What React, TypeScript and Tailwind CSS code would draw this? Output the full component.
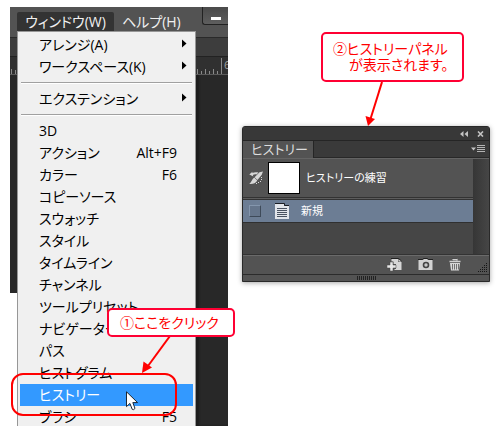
import React from "react";

type Entry = { label: string; shortcut?: string; submenu?: boolean; active?: boolean; cut?: boolean };

const groups: Entry[][] = [
  [
    { label: "アレンジ(A)", submenu: true },
    { label: "ワークスペース(K)", submenu: true },
  ],
  [{ label: "エクステンション", submenu: true }],
  [
    { label: "3D" },
    { label: "アクション", shortcut: "Alt+F9" },
    { label: "カラー", shortcut: "F6" },
    { label: "コピーソース" },
    { label: "スウォッチ" },
    { label: "スタイル" },
    { label: "タイムライン" },
    { label: "チャンネル" },
    { label: "ツールプリセット" },
    { label: "ナビゲーター" },
    { label: "パス" },
    { label: "ヒストグラム" },
    { label: "ヒストリー", active: true },
    { label: "ブラシ", shortcut: "F5", cut: true },
  ],
];

function MenuItem({ label, shortcut, submenu, active, cut }: Entry) {
  return (
    <button
      type="button"
      role="menuitem"
      className={`mx-[2px] flex items-start overflow-hidden pl-[19px] pr-4 text-left leading-[22px] ${
        cut ? "h-5" : "h-[22px]"
      } ${active ? "bg-[#3399ff] text-white" : "text-black"}`}
    >
      <span className="flex-1 whitespace-nowrap">{label}</span>
      {shortcut && <span>{shortcut}</span>}
      {submenu && (
        <svg className="-mr-[10px] mt-[5px]" width="5" height="9" viewBox="0 0 5 9" aria-hidden="true">
          <path d="M0 0.5L4.5 4.5L0 8.5Z" fill="#000" />
        </svg>
      )}
    </button>
  );
}

function WindowEdge({ ruler }: { ruler?: boolean }) {
  return (
    <>
      <div className="h-[6px] bg-[#535353]" />
      <div className="h-[19px] border-t border-[#2a2a2a] bg-[#3d3d3d]" />
      <div className="h-[19px] overflow-hidden border-y border-t-[#222222] border-b-[#5a5a5a] bg-[#303030]">
        <svg width="32" height="17" viewBox="0 0 32 17" aria-hidden="true" className="block">
          {ruler ? (
            <>
              <path
                d="M1.5 12v5M5.5 14v3M9.5 12v5M13.5 14v3M17.5 12v5M21.5 14v3M25.5 1v16"
                stroke="#8a8a8a"
                fill="none"
              />
              <text x="28" y="12" fontSize="11" fill="#a0a0a0" fontFamily="Open Sans, sans-serif">
                6
              </text>
            </>
          ) : (
            <path d="M1.5 12v5M5.5 13v4" stroke="#8a8a8a" fill="none" />
          )}
        </svg>
      </div>
    </>
  );
}

function AppWindow() {
  return (
    <section className="relative w-[218px] shrink-0 text-[14px]">
      <header className="flex h-6 items-end bg-[#535353] pl-[7px] text-[#f0f0f0]">
        <button type="button" className="h-[19px] w-[97px] rounded-t-[2px] bg-[#333333] leading-[19px] whitespace-nowrap">
          ウィンドウ(W)
        </button>
        <button type="button" className="h-[19px] pl-2 leading-[19px] whitespace-nowrap">
          ヘルプ(H)
        </button>
        <button
          type="button"
          aria-label="最小化"
          className="ml-auto flex h-[18px] w-[26px] items-end justify-end self-start rounded-bl-[3px] border-b border-l border-[#222222] bg-gradient-to-b from-[#4a4a4a] to-[#5e5e5e] pr-[7px] pb-1"
        >
          <span className="h-[3px] w-[10px] bg-white" />
        </button>
      </header>
      <div className="flex">
        <div className="h-[262px] w-[7px] shrink-0 bg-[#282828]">
          <WindowEdge />
        </div>
        <div role="menu" className="flex w-[179px] shrink-0 flex-col border-x border-t border-[#979797] bg-[#f0f0f0] pt-[2px]">
          {groups.map((group, i) => (
            <React.Fragment key={i}>
              {i > 0 && <hr className="mx-[3px] my-1 h-[2px] border-t border-b border-t-[#a0a0a0] border-b-white" />}
              {group.map((item) => (
                <MenuItem key={item.label} {...item} />
              ))}
            </React.Fragment>
          ))}
        </div>
        <div className="flex-1 bg-[#282828] shadow-[inset_3px_0_2px_#1c1c1c]">
          <WindowEdge ruler />
        </div>
      </div>

      <div className="absolute top-[366px] left-px h-[43px] w-[166px] rounded-xl border-2 border-[#ff0000]" />
      <svg className="absolute top-[329px] left-[130px]" width="34" height="40" viewBox="0 0 34 40" aria-hidden="true">
        <path d="M30 0L8 30" stroke="#ff0000" strokeWidth="2" />
        <path d="M2 37L3.5 25.5L12 31.5Z" fill="#ff0000" />
      </svg>
      <p className="absolute top-[301px] left-[97px] h-[29px] w-32 rounded-[5px] border-2 border-[#ff0033] bg-white pl-[11px] text-[14px] leading-[25px] whitespace-nowrap text-[#ff0000]">
        ①ここをクリック
      </p>
      <svg className="absolute top-[384px] left-[116px]" width="13" height="20" viewBox="0 0 13 20" aria-hidden="true">
        <path
          d="M0.5 0.8V15.6L3.9 12.4L6.2 18.3Q7.6 19.4 9 17.4L6.8 11.6H11.6Z"
          fill="#fff"
          stroke="#1c2733"
        />
      </svg>
    </section>
  );
}

function BrushIcon() {
  return (
    <svg width="14" height="14" viewBox="0 0 14 14" aria-hidden="true">
      <path d="M14 0.4L10.5 1.2L5.6 6.2L8.4 9L12.6 4Z" fill="#d8d8d8" />
      <path d="M5.2 6.6L8.2 9.4C7 12.4 3.2 13.2 0.2 12.8C2.6 11.4 2.8 8.6 5.2 6.6Z" fill="#d8d8d8" />
      <path d="M0.3 3.6L3.4 0.8V2C5 1.2 7.4 1.2 9.4 1.6L7.6 3.4C6 3.2 4.8 3.4 3.8 4L4.4 5.4Z" fill="#d8d8d8" />
      <path d="M12.5 6v1M12.5 8v1M11.5 10v1M9.5 11v1M7.5 12v1" stroke="#d8d8d8" />
    </svg>
  );
}

function DocumentIcon() {
  return (
    <svg width="14" height="16" viewBox="0 0 14 16" aria-hidden="true">
      <path d="M0 0.5H9.5V2.5H14" fill="none" stroke="#1b1e24" />
      <path d="M0 1H9V3H14V16H0Z" fill="#e2e5ea" />
      <path d="M2 5.5H12M2 7.5H12M2 9.5H12M2 11.5H12M2 13.5H12" stroke="#4a5361" />
    </svg>
  );
}

function NewDocIcon() {
  return (
    <svg width="15" height="13" viewBox="0 0 15 13" aria-hidden="true">
      <path d="M4 0.5H11.5L14.5 3" stroke="#202020" fill="none" />
      <path d="M4.5 1H11V4H14.5V12H7.5V11H9V6H6.5V3.5H4.5Z" fill="#d6d6d6" />
      <path d="M11.5 1.2L14.3 3.6H11.5Z" fill="#d6d6d6" />
      <path d="M3 4H6V7H9V10H6V13H3V10H0V7H3Z" fill="#e6e6e6" stroke="#444" strokeWidth="0.5" />
    </svg>
  );
}

function CameraIcon() {
  return (
    <svg width="15" height="13" viewBox="0 0 15 13" aria-hidden="true">
      <path d="M0 1.5H4.5L5.5 0.5H9.5L10.5 1.5H15" stroke="#202020" fill="none" />
      <path d="M0.5 2H5L6 1H9L10 2H14.5V12H0.5Z" fill="#d2d2d2" />
      <circle cx="8" cy="7" r="2.5" fill="#c8c8c8" stroke="#444" strokeWidth="1.6" />
    </svg>
  );
}

function TrashIcon() {
  return (
    <svg width="12" height="13" viewBox="0 0 12 13" aria-hidden="true">
      <path d="M3.5 2V0.5H8V2" stroke="#202020" fill="none" />
      <path d="M0.5 3.5H11.5M4 2V1.5H8V2.5" stroke="#d2d2d2" strokeWidth="1.4" fill="none" />
      <path d="M1 5H11L10 12.5H2Z" fill="#d8d8d8" />
      <path d="M3.5 6V11.5M5.5 6V11.5M7.5 6V11.5M9.5 6V11.5" stroke="#666" strokeWidth="0.9" />
    </svg>
  );
}

const gripDots = [0, 1, 2, 3, 4].flatMap((row) =>
  Array.from({ length: row + 1 }, (_, i) => ({ x: 8 - i * 2, y: row * 2 })),
);

function HistoryPanel() {
  return (
    <section className="rounded-t-[3px] border border-[#292929] bg-[#535353] shadow-[0_1px_5px_rgba(0,0,0,0.35)]">
      <div className="flex h-[14px] items-center justify-end gap-[9px] rounded-t-[2px] border-b border-[#252525] bg-[#383838] pr-[5px]">
        <button type="button" aria-label="折りたたむ">
          <svg className="block" width="8" height="6" viewBox="0 0 8 6" aria-hidden="true">
            <path d="M3.5 0V6L0 3ZM8 0V6L4.5 3Z" fill="#c4c4c4" />
          </svg>
        </button>
        <button type="button" aria-label="閉じる">
          <svg className="block" width="7" height="6" viewBox="0 0 7 6" aria-hidden="true">
            <path d="M1 0.5L6 5.5M6 0.5L1 5.5" stroke="#c4c4c4" strokeWidth="1.6" />
          </svg>
        </button>
      </div>
      <div className="flex h-[17px] items-stretch bg-[#3a3a3a]">
        <button type="button" role="tab" aria-selected="true" className="w-[71px] border-r border-[#252525] bg-[#535353] pl-2 text-left text-[13px] leading-[17px] whitespace-nowrap text-[#dddddd]">
          ヒストリー
        </button>
        <div className="flex flex-1 items-center justify-end border-b border-[#282828] pr-1">
          <button type="button" aria-label="パネルメニュー">
            <svg className="block" width="14" height="8" viewBox="0 0 14 8" aria-hidden="true">
              <path d="M0 2.5H5L2.5 5.5Z" fill="#c4c4c4" />
              <path d="M6 0.5H14M6 2.5H14M6 4.5H14M6 6.5H14" stroke="#b4b4b4" />
            </svg>
          </button>
        </div>
      </div>
      <div className="flex border-t border-[#646464]">
        <div className="min-w-0 flex-1 bg-[#464646] text-[11px]">
          <div className="flex h-[38px] items-center bg-[#535353] pl-[6px] text-white">
            <BrushIcon />
            <span className="ml-[5px] size-8 border border-black bg-white" />
            <span className="ml-[6px] whitespace-nowrap">ヒストリーの練習</span>
          </div>
          <div className="h-[3px] border-y border-[#333333] bg-[#5c5c5c]" />
          <label className="flex h-[22px] items-center bg-[#6c7d94] pl-[6px] text-white">
            <input
              type="checkbox"
              className="size-3 appearance-none border border-t-[#8496ad] border-r-[#3e4a59] border-b-[#3e4a59] border-l-[#8496ad] bg-[#65758b]"
            />
            <span className="ml-[14px]">
              <DocumentIcon />
            </span>
            <span className="ml-3 whitespace-nowrap">新規</span>
          </label>
          <div className="h-8 border-t border-[#303030]" />
        </div>
        <div className="w-4 bg-gradient-to-r from-[#363636] to-[#464646]" />
      </div>
      <footer className="flex h-5 items-center border-t border-[#333333] bg-[#535353] shadow-[inset_0_1px_0_#6a6a6a]">
        <div className="ml-auto flex items-center gap-4 pr-[17px]">
          <button type="button" aria-label="新規ドキュメントを作成">
            <NewDocIcon />
          </button>
          <button type="button" aria-label="新規スナップショット">
            <CameraIcon />
          </button>
          <button type="button" aria-label="削除">
            <TrashIcon />
          </button>
        </div>
        <svg className="mr-[2px] mb-[2px] self-end" width="9" height="9" viewBox="0 0 9 9" aria-hidden="true">
          {gripDots.map((d) => (
            <rect key={`${d.x}-${d.y}`} x={d.x} y={d.y} width="1" height="1" fill="#151515" />
          ))}
        </svg>
      </footer>
      <div className="flex h-[7px] justify-center border-t border-[#2b2b2b] pt-px">
        <svg width="19" height="4" viewBox="0 0 19 4" aria-hidden="true">
          <path d="M0.5 0v4M2.5 0v4M4.5 0v4M6.5 0v4M8.5 0v4M10.5 0v4M12.5 0v4M14.5 0v4M16.5 0v4M18.5 0v4" stroke="#222" />
        </svg>
      </div>
    </section>
  );
}

export default function App() {
  return (
    <main className="flex gap-[14px] bg-white pt-[7px] pr-[13px] pl-[10px] font-['Open_Sans','Noto_Sans_CJK_JP',sans-serif] [font-feature-settings:'palt']">
      <AppWindow />
      <div className="min-w-0 flex-1 pt-[25px]">
        <p className="ml-[79px] w-[143px] rounded-[5px] border-2 border-[#ff0033] bg-white px-[10px] py-[7px] text-[14px] leading-4 whitespace-nowrap text-[#ff0000]">
          ②ヒストリーパネル
          <br />
          <span className="pl-4">が表示されます。</span>
        </p>
        <svg className="ml-[122px] block" width="24" height="44" viewBox="0 0 24 44" aria-hidden="true">
          <path d="M18 0L6.5 37" stroke="#ff0000" strokeWidth="2" />
          <path d="M4 44L1.5 34L11 37Z" fill="#ff0000" />
        </svg>
        <HistoryPanel />
      </div>
    </main>
  );
}
